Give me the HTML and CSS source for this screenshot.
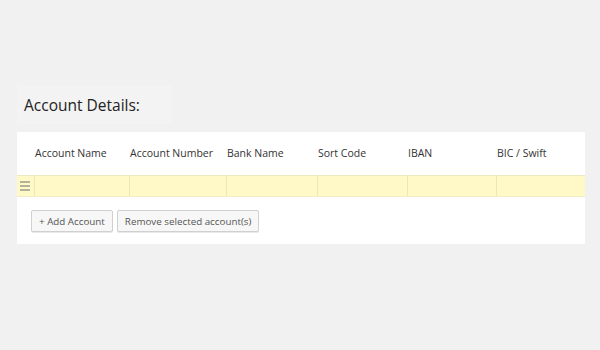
FILE: index.html
```html
<!DOCTYPE html>
<html>
<head>
<meta charset="utf-8">
<link rel="stylesheet" href="styles.css">
</head>
<body>
<div class="page">
  <div class="title-box"><h2 class="title">Account Details:</h2></div>
  <div class="card">
    <div class="grid head">
      <div class="cell"></div>
      <div class="cell">Account Name</div>
      <div class="cell">Account Number</div>
      <div class="cell">Bank Name</div>
      <div class="cell">Sort Code</div>
      <div class="cell">IBAN</div>
      <div class="cell">BIC / Swift</div>
    </div>
    <div class="grid row">
      <div class="cell handle"><span></span><span></span><span></span></div>
      <div class="cell"></div>
      <div class="cell"></div>
      <div class="cell"></div>
      <div class="cell"></div>
      <div class="cell"></div>
      <div class="cell"></div>
    </div>
    <div class="actions">
      <button class="btn">+ Add Account</button>
      <button class="btn">Remove selected account(s)</button>
    </div>
  </div>
</div>
</body>
</html>
```
FILE: styles.css
```css
html, body {
  margin: 0;
  padding: 0;
  background: #f1f1f1;
  font-family: "Open Sans", "Liberation Sans", sans-serif;
}
.page {
  padding: 85px 15px 0 17px;
}
.title-box {
  width: 155px;
  height: 39px;
  background: #f3f3f3;
  display: flex;
  align-items: center;
}
.title {
  margin: 0 0 0 7px;
  font-size: 15.5px;
  font-weight: 400;
  color: #222;
}
.card {
  margin-top: 8px;
  width: 568px;
  height: 112px;
  background: #fff;
}
.grid {
  display: grid;
  grid-template-columns: 18px 95px 97px 91px 90px 89px 88px;
}
.head {
  height: 43px;
  box-sizing: border-box;
  padding-bottom: 2px;
  align-items: center;
  font-size: 10.5px;
  color: #333;
}
.row {
  height: 22px;
  background: #fff9c7;
  border-top: 1px solid #efe9c2;
  border-bottom: 1px solid #f3eec8;
  box-sizing: border-box;
}
.row .cell {
  border-right: 1px solid #ede6b6;
}
.row .cell:last-child {
  border-right: 0;
}
.handle {
  display: flex;
  flex-direction: column;
  justify-content: center;
  gap: 2px;
  padding-left: 3px;
}
.handle span {
  display: block;
  width: 10px;
  height: 2px;
  background: #b5b29a;
}
.actions {
  display: flex;
  gap: 4px;
  padding: 13px 0 0 14px;
}
.btn {
  height: 22px;
  padding: 0 7px;
  font-family: "Open Sans", "Liberation Sans", sans-serif;
  font-size: 9.8px;
  color: #555;
  background: #f7f7f7;
  border: 1px solid #d0d0d0;
  border-radius: 2px;
  box-shadow: 0 1px 0 #e8e8e8;
}
```
